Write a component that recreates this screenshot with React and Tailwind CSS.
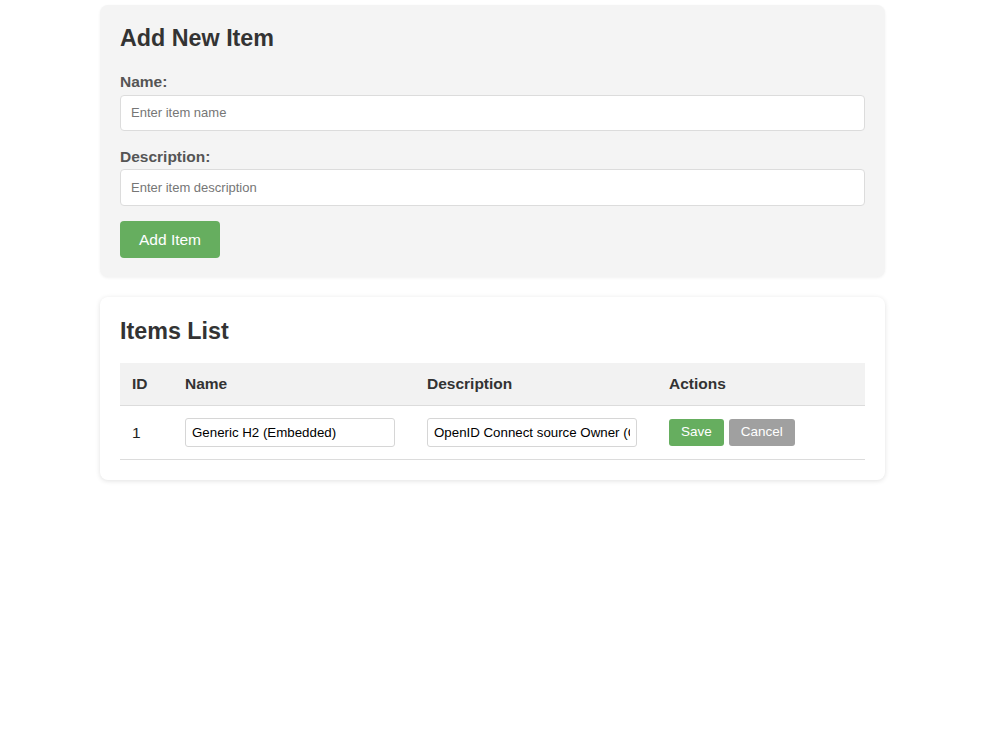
import { useState } from 'react';

const font = { fontFamily: '"Liberation Sans", Arial, Helvetica, sans-serif' };

const items = [
  { id: 1, name: 'Generic H2 (Embedded)', description: 'OpenID Connect source Owner (OIDC)' },
];

export default function App() {
  const [name, setName] = useState('');
  const [description, setDescription] = useState('');

  return (
    <div style={font} className="min-h-[750px] bg-white pt-[5px] text-[#333]">
      {/* Add form */}
      <section className="ml-[100px] w-[785px] rounded-[8px] bg-[#f4f4f4] px-[20px] pb-[19px] pt-[20px] shadow-[0_1px_3px_rgba(0,0,0,0.06)]">
        <h2 className="mb-[21px] text-[23.3px] font-bold leading-[1.15] text-[#333]">Add New Item</h2>
        <label className="block text-[15.5px] font-bold leading-[1.15] text-[#555]">Name:</label>
        <input
          value={name}
          onChange={(e) => setName(e.target.value)}
          placeholder="Enter item name"
          className="mt-[4px] block h-[36px] w-full rounded-[4px] border border-[#dcdcdc] bg-white px-[10px] text-[13px] text-[#333] outline-none placeholder:text-[#767676]"
        />
        <label className="mt-[17px] block text-[15.5px] font-bold leading-[1.15] text-[#555]">Description:</label>
        <input
          value={description}
          onChange={(e) => setDescription(e.target.value)}
          placeholder="Enter item description"
          className="mt-[4px] block h-[37px] w-full rounded-[4px] border border-[#dcdcdc] bg-white px-[10px] text-[13px] text-[#333] outline-none placeholder:text-[#767676]"
        />
        <button
          type="button"
          className="mt-[15px] h-[37px] rounded-[4px] bg-[#66ae5f] px-[19px] text-[15.5px] leading-[1.15] text-white"
        >
          Add Item
        </button>
      </section>

      {/* List */}
      <section className="ml-[100px] mt-[20px] w-[785px] rounded-[8px] bg-white px-[20px] pb-[20px] pt-[21px] shadow-[0_1px_5px_rgba(0,0,0,0.12)]">
        <h2 className="mb-[18px] text-[23.3px] font-bold leading-[1.15] text-[#333]">Items List</h2>
        <table className="w-[745px] table-fixed border-collapse text-left">
          <thead>
            <tr className="border-b border-[#dcdcdc] bg-[#f2f2f2]">
              <th className="w-[53px] px-[12px] py-[12px] text-[15.5px] font-bold leading-[1.15]">ID</th>
              <th className="w-[242px] px-[12px] py-[12px] text-[15.5px] font-bold leading-[1.15]">Name</th>
              <th className="w-[242px] px-[12px] py-[12px] text-[15.5px] font-bold leading-[1.15]">Description</th>
              <th className="w-[208px] px-[12px] py-[12px] text-[15.5px] font-bold leading-[1.15]">Actions</th>
            </tr>
          </thead>
          <tbody>
            {items.map((item) => (
              <tr key={item.id} className="border-b border-[#dcdcdc]">
                <td className="px-[12px] py-[12px] text-[15.5px] text-[#222]">{item.id}</td>
                <td className="px-[12px] py-[12px]">
                  <input
                    defaultValue={item.name}
                    className="block h-[29px] w-[210px] rounded-[3px] border border-[#d6d6d6] bg-white px-[6px] text-[13.3px] text-black outline-none"
                  />
                </td>
                <td className="px-[12px] py-[12px]">
                  <input
                    defaultValue={item.description}
                    className="block h-[29px] w-[210px] rounded-[3px] border border-[#d6d6d6] bg-white px-[6px] text-[13.3px] text-black outline-none"
                  />
                </td>
                <td className="px-[12px] py-[12px]">
                  <div className="flex gap-[5px]">
                    <button type="button" className="h-[27px] rounded-[3px] bg-[#66ae5f] px-[12px] text-[13.5px] text-white">
                      Save
                    </button>
                    <button type="button" className="h-[27px] rounded-[3px] bg-[#a0a0a0] px-[12px] text-[13.5px] text-white">
                      Cancel
                    </button>
                  </div>
                </td>
              </tr>
            ))}
          </tbody>
        </table>
      </section>
    </div>
  );
}
